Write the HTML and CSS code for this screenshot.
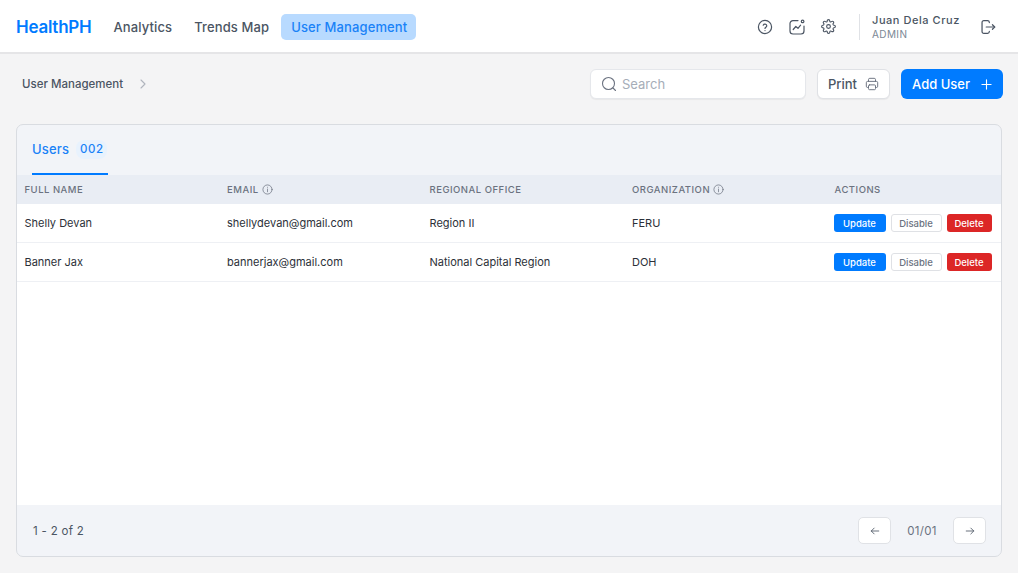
FILE: index.html
```html
<!DOCTYPE html>
<html lang="en">
<head>
    <meta charset="UTF-8">
    <meta name="viewport" content="width=device-width, initial-scale=1.0">
    <title>HealthPH - User Management</title>
    <link rel="stylesheet" href="styles.css">
</head>
<body>
    <header class="topbar">
        <div class="brand">HealthPH</div>
        <nav class="main-nav">
            <a class="nav-link">Analytics</a>
            <a class="nav-link">Trends Map</a>
            <a class="nav-link nav-active">User Management</a>
        </nav>
        <div class="top-icons">
            <svg class="icon-18" viewBox="0 0 18 18" fill="none" stroke="#4b5563" stroke-width="1.2" stroke-linecap="round" stroke-linejoin="round">
                <circle cx="9" cy="9" r="6.6"/>
                <path d="M7.2 7.2a1.9 1.9 0 0 1 3.6.6c0 1.2-1.8 1.6-1.8 2.6"/>
                <path d="M9 12.5v.1"/>
            </svg>
            <svg class="icon-18" viewBox="0 0 18 18" fill="none" stroke="#4b5563" stroke-width="1.2" stroke-linecap="round" stroke-linejoin="round">
                <path d="M10 2.6H5a3 3 0 0 0-3 3v7.400a3 3 0 0 0 3 3h8a3 3 0 0 0 3-3V8"/>
                <path d="M5.200 11.500l2.600-3 2.200 1.800 2.600-3.200"/>
                <circle cx="14.600" cy="3.400" r="1.300"/>
            </svg>
            <svg class="icon-gear" viewBox="0 0 24 24" fill="none" stroke="#4b5563" stroke-width="1.800" stroke-linecap="round" stroke-linejoin="round">
                <circle cx="12" cy="12" r="3"/>
                <path d="M19.4 15a1.65 1.65 0 0 0 .33 1.82l.06.06a2 2 0 1 1-2.83 2.83l-.06-.06a1.65 1.65 0 0 0-1.82-.33 1.65 1.65 0 0 0-1 1.51V21a2 2 0 0 1-4 0v-.09A1.65 1.65 0 0 0 9 19.4a1.65 1.65 0 0 0-1.82.33l-.06.06a2 2 0 1 1-2.83-2.83l.06-.06a1.65 1.65 0 0 0 .33-1.82 1.65 1.65 0 0 0-1.51-1H3a2 2 0 0 1 0-4h.09A1.65 1.65 0 0 0 4.6 9a1.65 1.65 0 0 0-.33-1.82l-.06-.06a2 2 0 1 1 2.83-2.83l.06.06a1.65 1.65 0 0 0 1.82.33H9a1.65 1.65 0 0 0 1-1.51V3a2 2 0 0 1 4 0v.09a1.65 1.65 0 0 0 1 1.51 1.65 1.65 0 0 0 1.82-.33l.06-.06a2 2 0 1 1 2.83 2.83l-.06.06a1.65 1.65 0 0 0-.33 1.82V9a1.65 1.65 0 0 0 1.51 1H21a2 2 0 0 1 0 4h-.09a1.65 1.65 0 0 0-1.51 1z"/>
            </svg>
        </div>
        <div class="user-box">
            <div class="user-name">Juan Dela Cruz</div>
            <div class="user-role">ADMIN</div>
        </div>
        <svg class="icon-logout" viewBox="0 0 18 18" fill="none" stroke="#4b5563" stroke-width="1.400" stroke-linecap="round" stroke-linejoin="round">
            <path d="M10.500 4V3.600A2 2 0 0 0 8.500 1.800H4.300a2 2 0 0 0-2 2v10.400a2 2 0 0 0 2 2h4.200a2 2 0 0 0 2-1.800V14"/>
            <path d="M7 9h9.500"/>
            <path d="M14 6.500L16.500 9 14 11.500"/>
        </svg>
    </header>

    <div class="toolbar">
        <div class="crumb">
            <span>User Management</span>
            <svg class="crumb-arrow" viewBox="0 0 8 12" fill="none" stroke="#b0b5bd" stroke-width="1.100" stroke-linecap="round" stroke-linejoin="round">
                <path d="M2 2L6 6 2 10"/>
            </svg>
        </div>
        <div class="search-box">
            <svg class="icon-search" viewBox="0 0 16 16" fill="none" stroke="#6b7280" stroke-width="1.100" stroke-linecap="round">
                <circle cx="7.500" cy="7.500" r="6"/>
                <path d="M12 12l2.500 2.500"/>
            </svg>
            <span>Search</span>
        </div>
        <button class="btn-print">Print
            <svg class="icon-print" viewBox="0 0 16 16" fill="none" stroke="#6b7280" stroke-width="1.100" stroke-linecap="round" stroke-linejoin="round">
                <path d="M4 5V3a1.500 1.500 0 0 1 1.500-1.500h5A1.500 1.500 0 0 1 12 3v2"/>
                <path d="M4 12H3a1.500 1.500 0 0 1-1.500-1.500v-4A1.500 1.500 0 0 1 3 5h10a1.500 1.500 0 0 1 1.500 1.500v4A1.500 1.500 0 0 1 13 12h-1"/>
                <rect x="4" y="9" width="8" height="5.500" rx="1.200"/>
            </svg>
        </button>
        <button class="btn-add">Add User
            <svg class="icon-plus" viewBox="0 0 12 12" fill="none" stroke="#fff" stroke-width="1.200" stroke-linecap="round">
                <path d="M6 1v10M1 6h10"/>
            </svg>
        </button>
    </div>

    <main class="card">
        <div class="tabs">
            <div class="tab">
                <span>Users</span>
                <span class="tab-count">002</span>
            </div>
        </div>
        <table class="users-table">
            <thead>
                <tr>
                    <th>FULL NAME</th>
                    <th>EMAIL <svg class="icon-info" viewBox="0 0 12 12" fill="none" stroke="#6b7280" stroke-width="0.800" stroke-linecap="round"><circle cx="6" cy="6" r="5"/><path d="M6 5.500v3M6 3.500v.1"/></svg></th>
                    <th>REGIONAL OFFICE</th>
                    <th>ORGANIZATION <svg class="icon-info" viewBox="0 0 12 12" fill="none" stroke="#6b7280" stroke-width="0.800" stroke-linecap="round"><circle cx="6" cy="6" r="5"/><path d="M6 5.500v3M6 3.500v.1"/></svg></th>
                    <th>ACTIONS</th>
                </tr>
            </thead>
            <tbody>
                <tr>
                    <td>Shelly Devan</td>
                    <td>shellydevan@gmail.com</td>
                    <td>Region II</td>
                    <td>FERU</td>
                    <td>
                        <div class="actions">
                            <button class="btn-sm btn-update">Update</button>
                            <button class="btn-sm btn-disable">Disable</button>
                            <button class="btn-sm btn-delete">Delete</button>
                        </div>
                    </td>
                </tr>
                <tr>
                    <td>Banner Jax</td>
                    <td>bannerjax@gmail.com</td>
                    <td>National Capital Region</td>
                    <td>DOH</td>
                    <td>
                        <div class="actions">
                            <button class="btn-sm btn-update">Update</button>
                            <button class="btn-sm btn-disable">Disable</button>
                            <button class="btn-sm btn-delete">Delete</button>
                        </div>
                    </td>
                </tr>
            </tbody>
        </table>
        <div class="table-space"></div>
        <div class="card-footer">
            <span class="range">1 - 2 of 2</span>
            <div class="pager">
                <button class="page-btn">
                    <svg class="icon-arrow" viewBox="0 0 12 12" fill="none" stroke="#4b5563" stroke-width="1" stroke-linecap="round" stroke-linejoin="round"><path d="M10.500 6h-9M5 2.500L1.500 6 5 9.500"/></svg>
                </button>
                <span class="page-num">01/01</span>
                <button class="page-btn">
                    <svg class="icon-arrow" viewBox="0 0 12 12" fill="none" stroke="#4b5563" stroke-width="1" stroke-linecap="round" stroke-linejoin="round"><path d="M1.500 6h9M7 2.500L10.500 6 7 9.500"/></svg>
                </button>
            </div>
        </div>
    </main>
</body>
</html>
```

FILE: styles.css
```css
* {
    margin: 0;
    padding: 0;
    box-sizing: border-box;
}

body {
    font-family: Inter, 'Noto Sans', sans-serif;
    background: #f4f4f5;
    width: 1018px;
    height: 573px;
    overflow: hidden;
    display: flex;
    flex-direction: column;
    color: #1f2937;
}

button {
    font-family: inherit;
    cursor: pointer;
}

.topbar {
    height: 54px;
    background: white;
    border-bottom: 2px solid #e5e5e7;
    display: flex;
    align-items: center;
    padding: 1px 16px 0;
    flex-shrink: 0;
}

.brand {
    color: #007bff;
    font-size: 17px;
    font-weight: 600;
    letter-spacing: -0.25px;
    margin-right: 12px;
}

.main-nav {
    display: flex;
    align-items: center;
    gap: 2px;
}

.nav-link {
    font-size: 13px;
    font-weight: 500;
    color: #4b5563;
    padding: 5px 10px;
    letter-spacing: 0.12px;
    border-radius: 5px;
}

.nav-active {
    background: #b8daff;
    color: #1a82f7;
    padding-right: 9px;
}

.top-icons {
    margin-left: auto;
    display: flex;
    align-items: center;
    gap: 14px;
}

.icon-18 {
    width: 18px;
    height: 18px;
}

.icon-gear {
    width: 15px;
    height: 15px;
    margin: 0 2px 0 1px;
}

.user-box {
    margin-left: 21px;
    padding-left: 12px;
    border-left: 1px solid #e0e2e6;
    height: 26px;
    display: flex;
    flex-direction: column;
    justify-content: center;
    width: 121px;
}

.user-name {
    font-size: 11px;
    font-weight: 500;
    color: #4b5563;
    letter-spacing: 0.55px;
    line-height: 14px;
}

.user-role {
    font-size: 10px;
    color: #7b8794;
    letter-spacing: 0.4px;
    line-height: 14px;
}

.icon-logout {
    width: 16px;
    height: 16px;
    margin-right: 6px;
}

.toolbar {
    display: flex;
    align-items: center;
    height: 70px;
    padding: 0 15px 10px 22px;
    flex-shrink: 0;
}

.crumb {
    display: flex;
    align-items: center;
    gap: 16px;
    font-size: 11.5px;
    font-weight: 500;
    color: #4b5563;
    margin-right: auto;
}

.crumb-arrow {
    width: 8px;
    height: 12px;
}

.search-box {
    width: 216px;
    height: 30px;
    background: white;
    border: 1px solid #e5e7eb;
    border-radius: 6px;
    display: flex;
    align-items: center;
    gap: 5px;
    padding-left: 10px;
    font-size: 13px;
    color: #a6adb8;
    box-shadow: 0 1px 1px rgba(0,0,0,0.05);
}

.icon-search {
    width: 16px;
    height: 16px;
}

.btn-print {
    width: 73px;
    height: 30px;
    margin-left: 11px;
    background: white;
    border: 1px solid #dfe1e5;
    border-radius: 6px;
    font-size: 13px;
    font-weight: 500;
    color: #4b5563;
    display: flex;
    align-items: center;
    justify-content: center;
    gap: 8px;
    box-shadow: 0 1px 1px rgba(0,0,0,0.05);
}

.icon-print {
    width: 14px;
    height: 14px;
}

.btn-add {
    width: 102px;
    height: 30px;
    margin-left: 11px;
    background: #007bff;
    border: none;
    border-radius: 6px;
    font-size: 13px;
    font-weight: 500;
    color: white;
    display: flex;
    align-items: center;
    justify-content: center;
    gap: 11px;
}

.icon-plus {
    width: 11px;
    height: 11px;
}

.card {
    margin: 0 16px 16px;
    flex: 1;
    background: #f2f4f8;
    border: 1px solid #d9dce1;
    border-radius: 7px;
    display: flex;
    flex-direction: column;
    overflow: hidden;
}

.tabs {
    height: 50px;
    display: flex;
    padding-left: 15px;
    flex-shrink: 0;
}

.tab {
    display: flex;
    align-items: center;
    gap: 7px;
    padding-right: 1px;
    color: #1a82f7;
    font-size: 13px;
    font-weight: 500;
    letter-spacing: 0.15px;
    border-bottom: 2px solid #007bff;
}

.tab-count {
    background: #e8f2fd;
    border-radius: 8px;
    height: 19px;
    line-height: 19px;
    padding: 0 4px;
    font-size: 11.5px;
    letter-spacing: 0.5px;
}

.users-table {
    width: 100%;
    border-collapse: separate;
    border-spacing: 0;
    table-layout: fixed;
    background: white;
}

.users-table th {
    background: #e9edf4;
    height: 29px;
    text-align: left;
    font-size: 9.5px;
    font-weight: 500;
    color: #6b7280;
    letter-spacing: 0.5px;
    padding-left: 7.5px;
    width: 202.5px;
}

.users-table th:last-child {
    width: 174px;
}

.users-table td {
    height: 39px;
    font-size: 11px;
    color: #2b3038;
    padding-left: 7.5px;
    border-bottom: 1px solid #eef0f4;
}

.users-table td:last-child {
    padding-left: 6.5px;
}

.icon-info {
    width: 11px;
    height: 11px;
    vertical-align: -2px;
}

.actions {
    display: flex;
    gap: 5px;
}

.btn-sm {
    width: 52px;
    height: 18px;
    border-radius: 3px;
    font-size: 9.5px;
    font-weight: 500;
    border: 1px solid transparent;
}

.btn-update {
    background: #007bff;
    color: white;
}

.btn-disable {
    width: 51px;
    background: white;
    color: #6b7280;
    border-color: #dfe1e5;
}

.btn-delete {
    width: 45px;
    background: #dc2626;
    color: white;
}

.table-space {
    flex: 1;
    background: white;
}

.card-footer {
    height: 51px;
    display: flex;
    align-items: center;
    justify-content: space-between;
    padding: 0 15px 0 16px;
    flex-shrink: 0;
}

.range {
    font-size: 11.5px;
    color: #4b5563;
    letter-spacing: 0.3px;
}

.pager {
    display: flex;
    align-items: center;
}

.page-btn {
    width: 33px;
    height: 27px;
    background: white;
    border: 1px solid #e0e2e6;
    border-radius: 5px;
    display: flex;
    align-items: center;
    justify-content: center;
}

.icon-arrow {
    width: 10px;
    height: 10px;
}

.page-num {
    width: 62px;
    text-align: center;
    font-size: 11.5px;
    letter-spacing: 0.3px;
    color: #6b7280;
}
```
